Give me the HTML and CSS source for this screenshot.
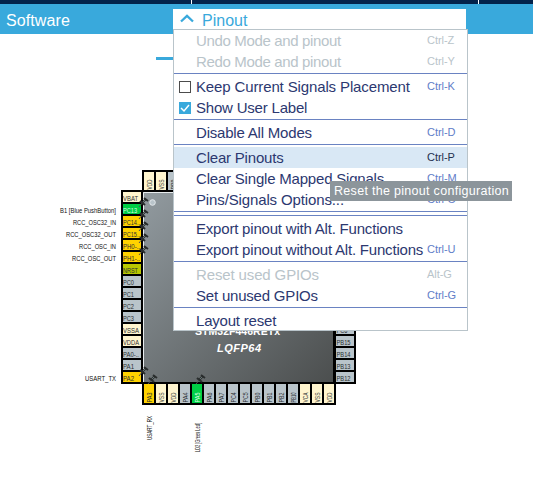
FILE: index.html
```
<!DOCTYPE html>
<html lang="en">
<head>
<meta charset="utf-8">
<title>Pinout</title>
<link rel="stylesheet" href="styles.css">
</head>
<body>
<div class="topbar"><i></i><i></i></div>
<header class="toolbar"><span>Software</span></header>
<main class="canvas">
<div class="tab-line"></div>
<svg class="chip" id="chip" width="533" height="452" viewBox="0 34 533 452">
<defs>
<linearGradient id="body" x1="0" y1="0" x2="1" y2="1"><stop offset="0" stop-color="#929ba0"/><stop offset="1" stop-color="#4b4e4e"/></linearGradient>
<g id="pin"><path d="M-4 5L0 0" stroke="#555" stroke-width="1"/><path d="M-3-1L2 3M-1 1L3-3" stroke="#292d2d" stroke-width="2.2"/><path d="M1-4L5-1" stroke="#292d2d" stroke-width="1.8"/><path d="M0 0L2-2" stroke="#788" stroke-width=".8"/></g>
</defs>
<rect x="142" y="191" width="192" height="192" fill="url(#body)" stroke="#000" stroke-width="2"/>
<path d="M143.500 382V192.500H333" fill="none" stroke="#e8ecee"/>
<circle cx="152.500" cy="202.500" r="2.800" fill="#b9c4ca" stroke="#e3e8eb"/>
<text class="part" x="195" y="334.500" textLength="85">STM32F446RETx</text>
<text class="package" x="217" y="352" textLength="44">LQFP64</text>
<g id="pins"></g>
</svg>
</main>
<section class="dropdown">
<h1><svg width="14" height="9" viewBox="0 0 14 9"><path d="M1 7.500L7 1.800L13 7.500" fill="none" stroke="#39a9dc" stroke-width="2.300"/></svg><span>Pinout</span></h1>
<div class="menu">
<div class="row off tight"><span>Undo Mode and pinout</span><kbd>Ctrl-Z</kbd></div>
<div class="row off tight"><span>Redo Mode and pinout</span><kbd>Ctrl-Y</kbd></div>
<div class="sep"></div>
<div class="row loose"><b class="box"></b><span>Keep Current Signals Placement</span><kbd>Ctrl-K</kbd></div>
<div class="row"><b class="box checked"><svg width="12" height="12" viewBox="0 0 12 12"><path d="M2 6L5 9L10 3" fill="none" stroke="#fff" stroke-width="1.500"/></svg></b><span>Show User Label</span></div>
<div class="sep"></div>
<div class="row"><span>Disable All Modes</span><kbd>Ctrl-D</kbd></div>
<div class="sep"></div>
<div class="row active"><span>Clear Pinouts</span><kbd>Ctrl-P</kbd></div>
<div class="row"><span>Clear Single Mapped Signals</span><kbd>Ctrl-M</kbd></div>
<div class="row loose"><span>Pins/Signals Options...</span><kbd>Ctrl-O</kbd></div>
<div class="sep"></div>
<div class="sep"></div>
<div class="row"><span>Export pinout with Alt. Functions</span></div>
<div class="row"><span>Export pinout without Alt. Functions</span><kbd>Ctrl-U</kbd></div>
<div class="sep"></div>
<div class="row off loose"><span>Reset used GPIOs</span><kbd>Alt-G</kbd></div>
<div class="row"><span>Set unused GPIOs</span><kbd>Ctrl-G</kbd></div>
<div class="sep"></div>
<div class="row"><span>Layout reset</span></div>
</div>
</section>
<div class="tip">Reset the pinout configuration</div>
<script src="script.js"></script>
</body>
</html>
```
FILE: styles.css
```
* { box-sizing: border-box; }
body { margin: 0; height: 486px; overflow: hidden; position: relative; background: #fff; font-family: "Liberation Sans", Arial, sans-serif; }
.topbar { height: 4px; background: #03234b; display: flex; padding-left: 191px; gap: 286px; }
.topbar i { width: 1px; background: #fff; }
.toolbar { height: 30px; background: #39a9dc; color: #fff; font-size: 16px; padding: 0 6px; line-height: 33px; letter-spacing: .1px; }
.canvas { position: relative; }
.chip { display: block; }
.tab-line { position: absolute; left: 156px; top: 23px; width: 30px; height: 3px; background: #39a9dc; }
.part { font: bold 10.5px "Liberation Sans", sans-serif; fill: #fff; }
.package { font: italic bold 11px "Liberation Sans", sans-serif; fill: #fff; }
.name { font: 6.3px "Liberation Sans", sans-serif; fill: #2b3033; }
.name.lit { fill: #d9ffe2; }
.label { font: 6.3px "Liberation Sans", sans-serif; fill: #111; }
.dropdown { position: absolute; left: 173px; top: 9px; width: 295px; }
h1 { margin: 0; width: 293px; height: 20px; background: #fff; color: #39a9dc; font-size: 16px; font-weight: normal; display: flex; align-items: center; padding-left: 7px; gap: 8px; line-height: 20px; }
h1 svg { margin-top: -1px; }
h1 span { padding-top: 3px; }
.menu { height: 302px; border: 1px solid #b9c4ca; background: #fff; }
.row { height: 21px; display: flex; align-items: center; position: relative; padding: 0 0 0 22px; color: #2c3870; font-size: 15px; line-height: 21px; letter-spacing: -.2px; white-space: nowrap; }
.row.tight { letter-spacing: -.35px; }
.row.loose { letter-spacing: -.13px; }
.row kbd { position: absolute; left: 253px; top: 0; font: 11px/21px "Liberation Sans", sans-serif; letter-spacing: -.05px; color: #5f7dc8; }
.row.off, .row.off kbd { color: #b9c4ca; }
.row.active { background: #d9e8f5; }
.row.active kbd { color: #24304f; }
.box { width: 12px; height: 12px; border: 1px solid #4c4c4c; margin: 0 5px 0 -17px; }
.box.checked { border: 0; background: #39a9dc; }
.box svg { display: block; }
.sep { height: 4px; padding-top: 1px; }
.sep::after { content: ""; display: block; height: 1px; background: #6a83c2; }
.tip { position: absolute; left: 330px; top: 181px; width: 182px; height: 20px; padding-left: 4px; background: #8c959b; color: #fff; font-size: 12.5px; line-height: 20px; letter-spacing: .3px; white-space: nowrap; }
```
FILE: script.js
```
const NS = "http://www.w3.org/2000/svg";
const layer = document.getElementById("pins");
const colors = { g: "#b9c4ca", c: "#fff5ce", y: "#ffd200", n: "#00cf45", o: "#b9c800" };

function add(tag, attrs, text) {
  const el = document.createElementNS(NS, tag);
  for (const key in attrs) el.setAttribute(key, attrs[key]);
  if (text) el.textContent = text;
  layer.appendChild(el);
}
function pad(x, y, w, h, color) {
  add("rect", { x, y, width: w, height: h, fill: colors[color], stroke: "#000", "stroke-width": 2 });
}

const left = ["VBAT c 15", "PC13 n 14", "PC14.. y 17", "PC15.. y 17", "PH0-.. y 17", "PH1-.. y 17", "NRST o 15", "PC0 g 11", "PC1 g 11", "PC2 g 11", "PC3 g 11", "VSSA c 16", "VDDA c 16", "PA0-.. g 16", "PA1 g 11", "PA2 y 11"];
left.forEach((item, i) => {
  const [name, color, len] = item.split(" ");
  pad(122, 191 + i * 12, 20, 12, color);
  add("text", { x: 123, y: 201.2 + i * 12, textLength: len, lengthAdjust: "spacingAndGlyphs", class: color === "n" ? "name lit" : "name" }, name);
});

const bottom = ["PA3 y", "VSS c", "VDD c", "PA4 g", "PA5 n", "PA6 g", "PA7 g", "PC4 g", "PC5 g", "PB0 g", "PB1 g", "PB2 g", "PB10 g", "VCA c", "VSS c", "VDD c"];
bottom.forEach((item, i) => {
  const [name, color] = item.split(" ");
  pad(143 + i * 12, 383, 12, 21, color);
  add("text", { transform: `translate(${151.7 + i * 12} 402.500) rotate(-90)`, textLength: 10, lengthAdjust: "spacingAndGlyphs", class: color === "n" ? "name lit" : "name" }, name);
});

["VDD c", "VSS c", "PB9 g"].forEach((item, i) => {
  const [name, color] = item.split(" ");
  pad(143 + i * 12, 171, 12, 20, color);
  add("text", { transform: `translate(${151.7 + i * 12} 189.500) rotate(-90)`, textLength: 10, lengthAdjust: "spacingAndGlyphs", class: "name" }, name);
});

["PC6", "PB15", "PB14", "PB13", "PB12"].forEach((name, i) => {
  pad(335, 323 + i * 12, 20, 12, "g");
  add("text", { x: 336.5, y: 333 + i * 12, textLength: i ? 14 : 11, lengthAdjust: "spacingAndGlyphs", class: "name" }, name);
});

[["B1 [Blue PushButton]", 60, 213, 56], ["RCC_OSC32_IN", 73, 225, 43], ["RCC_OSC32_OUT", 66, 237, 50], ["RCC_OSC_IN", 79, 249, 37], ["RCC_OSC_OUT", 72, 261, 44], ["USART_TX", 85, 381, 31]].forEach(([text, x, y, len]) => {
  add("text", { x, y, textLength: len, lengthAdjust: "spacingAndGlyphs", class: "label" }, text);
});
[["USART_RX", 152, 440, 24], ["LD2 [Green Led]", 200, 452, 29]].forEach(([text, x, y, len]) => {
  add("text", { transform: `translate(${x} ${y}) rotate(-90)`, textLength: len, lengthAdjust: "spacingAndGlyphs", class: "label" }, text);
});
[[143, 202], [143, 214], [143, 226], [143, 238], [143, 250], [143, 371], [152, 379], [200, 379]].forEach(([x, y]) => {
  add("use", { href: "#pin", x, y });
});
```
